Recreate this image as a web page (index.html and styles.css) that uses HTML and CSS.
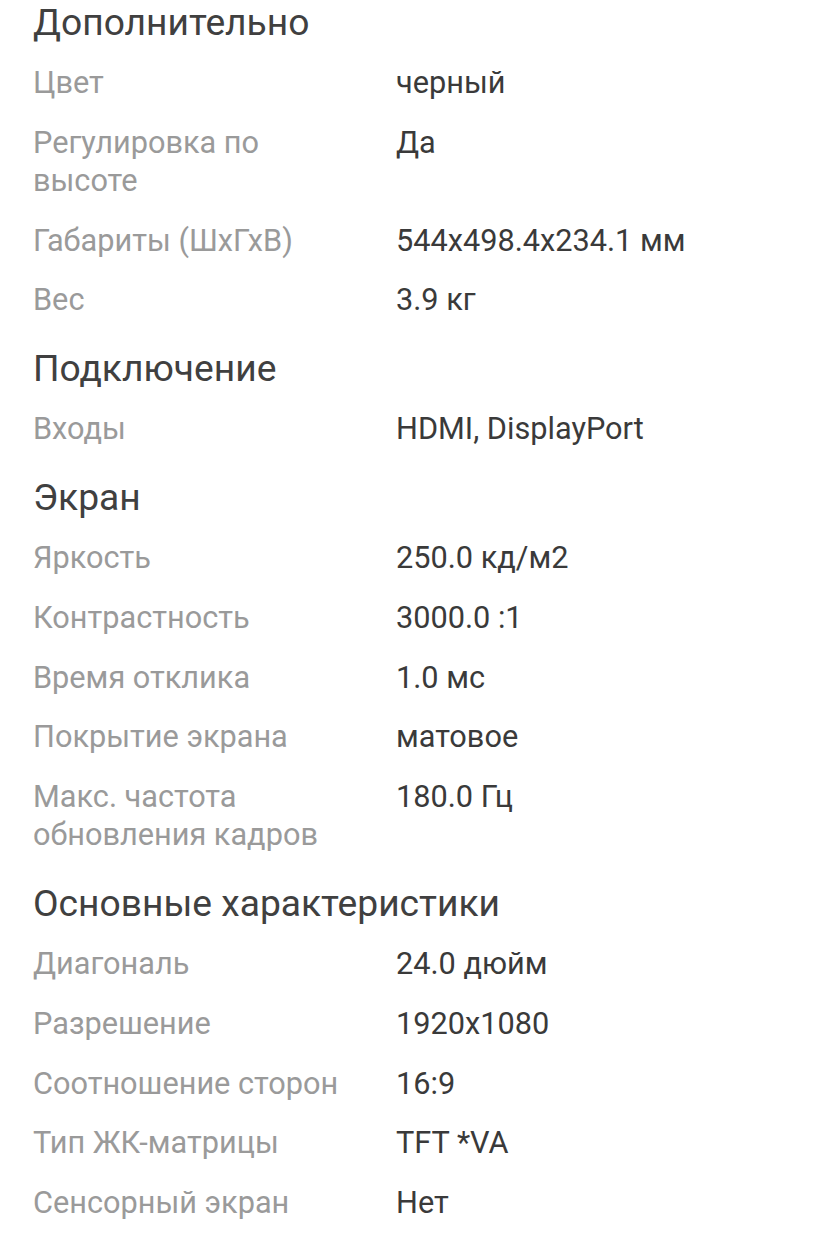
FILE: index.html
```html
<!DOCTYPE html>
<html lang="ru">
<head>
<meta charset="utf-8">
<title>Характеристики</title>
<link rel="stylesheet" href="styles.css">
</head>
<body>
<main class="specs">
  <section class="group">
    <h2 class="group-title first">Дополнительно</h2>
    <div class="row"><div class="label">Цвет</div><div class="value">черный</div></div>
    <div class="row"><div class="label">Регулировка по высоте</div><div class="value">Да</div></div>
    <div class="row"><div class="label">Габариты (ШхГхВ)</div><div class="value">544x498.4x234.1 мм</div></div>
    <div class="row"><div class="label">Вес</div><div class="value">3.9 кг</div></div>
  </section>
  <section class="group">
    <h2 class="group-title">Подключение</h2>
    <div class="row"><div class="label">Входы</div><div class="value">HDMI, DisplayPort</div></div>
  </section>
  <section class="group">
    <h2 class="group-title">Экран</h2>
    <div class="row"><div class="label">Яркость</div><div class="value">250.0 кд/м2</div></div>
    <div class="row"><div class="label">Контрастность</div><div class="value">3000.0 :1</div></div>
    <div class="row"><div class="label">Время отклика</div><div class="value">1.0 мс</div></div>
    <div class="row"><div class="label">Покрытие экрана</div><div class="value">матовое</div></div>
    <div class="row"><div class="label">Макс. частота обновления кадров</div><div class="value">180.0 Гц</div></div>
  </section>
  <section class="group">
    <h2 class="group-title">Основные характеристики</h2>
    <div class="row"><div class="label">Диагональ</div><div class="value">24.0 дюйм</div></div>
    <div class="row"><div class="label">Разрешение</div><div class="value">1920x1080</div></div>
    <div class="row"><div class="label">Соотношение сторон</div><div class="value">16:9</div></div>
    <div class="row"><div class="label">Тип ЖК-матрицы</div><div class="value">TFT *VA</div></div>
    <div class="row"><div class="label">Сенсорный экран</div><div class="value">Нет</div></div>
  </section>
</main>
</body>
</html>
```

FILE: styles.css
```css
html, body {
  margin: 0;
  padding: 0;
  background: #ffffff;
}

body {
  font-family: Roboto, "Noto Sans", "Liberation Sans", sans-serif;
  -webkit-font-smoothing: antialiased;
}

.specs {
  padding: 0 34px 0 33px;
}

.group-title {
  margin: 0;
  padding: 15px 0 8px;
  font-size: 37.2px;
  line-height: 46px;
  font-weight: 400;
  color: #404040;
}

.group-title.first {
  padding-top: 0;
  margin-top: -1px;
}

.row {
  display: grid;
  grid-template-columns: 331px 1fr;
  column-gap: 32px;
  padding: 11px 0 10.8px;
  font-size: 30.7px;
  line-height: 38px;
}

.label {
  color: #9a9a9a;
}

.value {
  color: #3a3a3a;
}
```
